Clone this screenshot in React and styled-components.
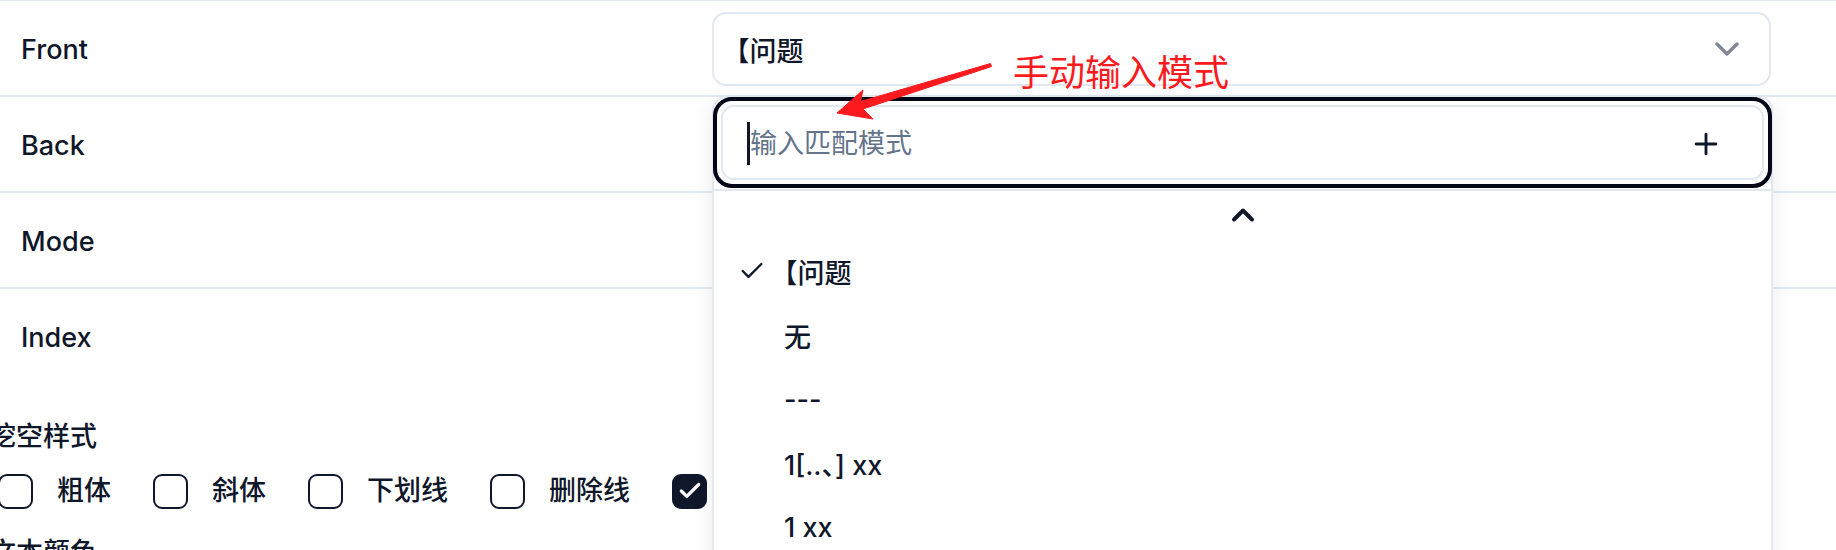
import React from 'react'
import styled, { createGlobalStyle } from 'styled-components'
import { ChevronDown, ChevronUp, Check, Plus } from 'lucide-react'

const GlobalStyle = createGlobalStyle`
  html, body {
    margin: 0;
    padding: 0;
    background: #ffffff;
  }
  body {
    font-family: Inter, "Noto Sans CJK SC", sans-serif;
    color: #0f172a;
  }
`

const fields = [
  { name: 'Front', value: '【问题' },
  { name: 'Back', value: '【答案' },
  { name: 'Mode', value: '挖空' },
  { name: 'Index', value: '无' },
]

const options = ['【问题', '无', '---', '1[..、] xx', '1 xx']

const clozeStyles = [
  { label: '粗体', checked: false },
  { label: '斜体', checked: false },
  { label: '下划线', checked: false },
  { label: '删除线', checked: false },
  { label: '高亮', checked: true },
]

// leading 【 is set half width, like the source font does
const renderText = (text) => {
  if (text.startsWith('【')) {
    return (
      <>
        <Bracket>【</Bracket>
        {text.slice(1)}
      </>
    )
  }
  return text
}

function App() {
  return (
    <Page>
      <GlobalStyle />
      <FieldTable>
        {fields.map((field) => (
          <FieldRow key={field.name}>
            <FieldLabel>{field.name}</FieldLabel>
            <SelectBox>
              <span>{renderText(field.value)}</span>
              <ChevronDown size={40} strokeWidth={2} />
            </SelectBox>
          </FieldRow>
        ))}
      </FieldTable>

      <StyleSection>
        <SectionTitle>挖空样式</SectionTitle>
        <CheckRow>
          {clozeStyles.map((item) => (
            <CheckItem key={item.label}>
              <CheckBox $checked={item.checked}>
                {item.checked && <Check size={26} strokeWidth={3} />}
              </CheckBox>
              <span>{item.label}</span>
            </CheckItem>
          ))}
        </CheckRow>
        <SectionTitle>文本颜色</SectionTitle>
      </StyleSection>

      <Popover>
        <SearchSection>
          <SearchRing>
            <SearchInput>
              <Caret />
              <input placeholder="输入匹配模式" />
              <AddButton>
                <Plus size={34} strokeWidth={2} />
              </AddButton>
            </SearchInput>
          </SearchRing>
        </SearchSection>
        <ScrollUp>
          <ChevronUp size={36} strokeWidth={2.6} />
        </ScrollUp>
        {options.map((opt, i) => (
          <Option key={opt}>
            <OptionCheck>{i === 0 && <Check size={34} strokeWidth={2} />}</OptionCheck>
            <span>{renderText(opt)}</span>
          </Option>
        ))}
      </Popover>

      <Note>手动输入模式</Note>
      <Arrow width="1836" height="550" viewBox="0 0 1836 550">
        <polygon
          points="837,113 873,119 863,109 991.5,66.5 990.5,63.5 860.5,101.5 863,90"
          fill="#fb1a1d"
          stroke="#fb1a1d"
          strokeWidth="1"
          strokeLinejoin="round"
        />
      </Arrow>
    </Page>
  )
}

const Page = styled.div`
  position: relative;
  width: 1836px;
  height: 550px;
  overflow: hidden;
  font-size: 27px;
`

const Bracket = styled.span`
  font-family: "Noto Sans CJK SC", sans-serif;
  font-feature-settings: "halt";
`

const FieldTable = styled.div`
  border-top: 1px solid #e2e8f0;
`

const FieldRow = styled.div`
  display: grid;
  grid-template-columns: 712px 1059px 1fr;
  align-items: center;
  height: 94px;
  border-bottom: 2px solid #e2e8f0;

  &:last-child {
    border-bottom: none;
  }
`

const FieldLabel = styled.div`
  padding: 3px 0 0 21px;
  font-weight: 500;
`

const SelectBox = styled.div`
  box-sizing: border-box;
  height: 74px;
  margin-top: 2px;
  display: flex;
  align-items: center;
  justify-content: space-between;
  padding: 0 22px 0 22px;
  border: 2px solid #e2e8f0;
  border-radius: 14px;
  font-weight: 500;

  svg {
    color: #6b7280;
    opacity: 0.85;
  }
`

const StyleSection = styled.div`
  margin: 36px 0 0 -11px;
`

const SectionTitle = styled.div`
  font-size: 27px;
  line-height: 36px;
  font-weight: 500;
`

const CheckRow = styled.div`
  display: flex;
  align-items: center;
  gap: 42px;
  margin: 18px 0 26px 9px;
`

const CheckItem = styled.label`
  display: flex;
  align-items: center;
  gap: 24px;
  font-weight: 500;
  line-height: 36px;
`

const CheckBox = styled.span`
  box-sizing: border-box;
  width: 35px;
  height: 35px;
  border: 2.5px solid #0f172a;
  border-radius: 9px;
  display: flex;
  align-items: center;
  justify-content: center;
  background: ${(p) => (p.$checked ? '#0f172a' : '#ffffff')};
  color: #ffffff;
`

const Popover = styled.div`
  position: absolute;
  top: 96px;
  left: 712px;
  width: 1061px;
  height: 520px;
  box-sizing: border-box;
  background: #ffffff;
  border: 2px solid #e2e8f0;
  border-radius: 14px;
  box-shadow: 0 6px 22px rgba(15, 23, 42, 0.08);
`

const SearchSection = styled.div`
  padding-bottom: 1px;
  border-bottom: 2px solid #e2e8f0;
`

const SearchRing = styled.div`
  margin: -1px -1px 0;
  padding: 4px;
  border: 4px solid #020617;
  border-radius: 19px;
  background: #ffffff;
`

const SearchInput = styled.div`
  box-sizing: border-box;
  height: 75px;
  display: flex;
  align-items: center;
  padding: 2px 0 0 24px;
  border: 2px solid #e2e8f0;
  border-radius: 13px;

  input {
    flex: 1;
    border: none;
    outline: none;
    padding: 0;
    font: inherit;
    font-size: 27px;
    color: #0f172a;
    background: transparent;
  }

  input::placeholder {
    color: #64748b;
  }
`

const Caret = styled.span`
  width: 3px;
  height: 43px;
  background: #0f172a;
`

const AddButton = styled.span`
  display: flex;
  align-items: center;
  justify-content: center;
  margin-right: 39px;
  color: #0f172a;
`

const ScrollUp = styled.div`
  height: 48px;
  display: flex;
  align-items: center;
  justify-content: center;
  color: #0f172a;
`

const Option = styled.div`
  height: 64px;
  display: flex;
  align-items: center;
  gap: 18px;
  padding-left: 24px;
  font-weight: 500;
`

const OptionCheck = styled.span`
  width: 28px;
  height: 34px;
  display: flex;
  align-items: center;
  justify-content: center;
  color: #0f172a;
`

const Note = styled.div`
  position: absolute;
  top: 52px;
  left: 1013px;
  font-family: "Noto Sans CJK SC", sans-serif;
  font-size: 36px;
  line-height: 36px;
  color: #fb1a1d;
`

const Arrow = styled.svg`
  position: absolute;
  top: 0;
  left: 0;
  pointer-events: none;
`

export default App
